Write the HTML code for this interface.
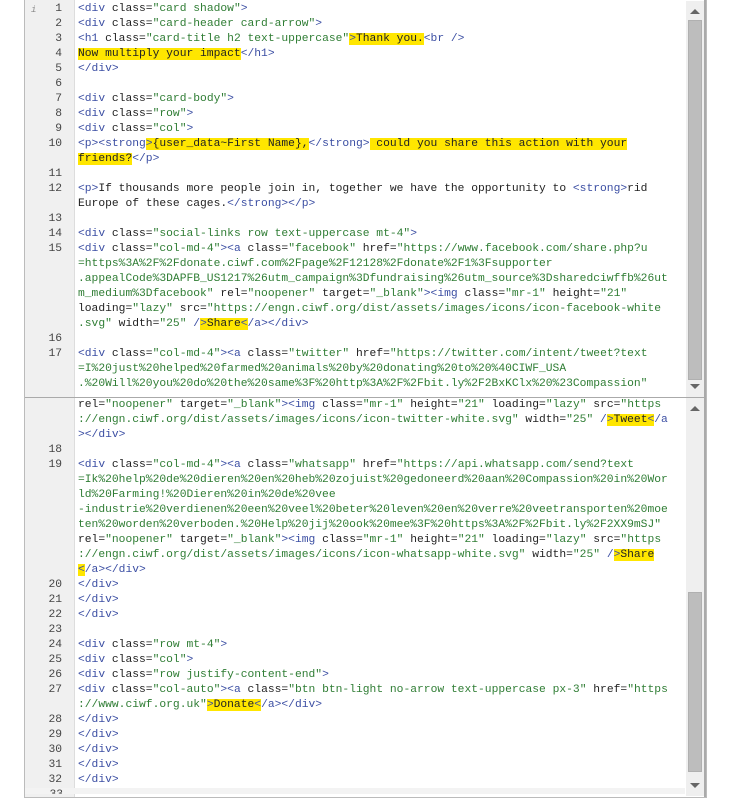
<!DOCTYPE html>
<html><head><meta charset="utf-8"><style>
body{margin:0;background:#fff;width:730px;height:799px;overflow:hidden;position:relative;font-family:"Liberation Mono",monospace;}
.ed{position:absolute;left:24px;top:-2px;width:681px;height:798px;border:1px solid #bbb;background:#fff;overflow:hidden}
.gut{position:absolute;left:0;top:0;width:49px;height:100%;background:#f0f0f0;border-right:1px solid #ddd}
.r{position:absolute;left:0;height:15px;line-height:15px;white-space:pre;font-size:11.3px;color:#222}
.n{position:absolute;left:0;width:38px;text-align:right;height:15px;line-height:15px;font-size:11.3px;color:#444}
.c{position:absolute;left:54px}
.t{color:#3b4ea3}.s{color:#2f7d34}.h{background:#ffe600}
.split{position:absolute;left:0;top:398px;width:681px;height:1px;background:#aaa}
.sb{position:absolute;left:661px;width:18px;background:#efefef}
.th{position:absolute;left:2px;width:14px;background:#bdbdbd;border:1px solid #b0b0b0;box-sizing:border-box}
.ar{position:absolute;left:4px;width:0;height:0;border-left:5px solid transparent;border-right:5px solid transparent}
.up{border-bottom:5px solid #666}.dn{border-top:5px solid #666}
.edge{position:absolute;left:679px;top:0;width:2px;height:100%;background:#aaa}
</style></head><body>
<div class="ed">
<div class="gut"></div>
<div class="split"></div>
<div class="sb" style="top:2px;height:396px"><div class="ar up" style="top:8px"></div><div class="th" style="top:19px;height:360px"></div><div class="ar dn" style="top:383px"></div></div>
<div class="sb" style="top:399px;height:398px"><div class="ar up" style="top:8px"></div><div class="th" style="top:194px;height:180px"></div><div class="ar dn" style="top:385px"></div></div>
<div class="edge"></div>
<div style="position:absolute;left:6px;top:6px;font-size:9px;color:#888;font-style:italic">i</div>
</div>
<div style="position:absolute;left:24px;top:2px">
<div class="n" style="top:0px">1</div><div class="r c" style="top:0px"><span class="t">&lt;div</span> class=<span class="s">"card shadow"</span><span class="t">&gt;</span></div>
<div class="n" style="top:15px">2</div><div class="r c" style="top:15px"><span class="t">&lt;div</span> class=<span class="s">"card-header card-arrow"</span><span class="t">&gt;</span></div>
<div class="n" style="top:30px">3</div><div class="r c" style="top:30px"><span class="t">&lt;h1</span> class=<span class="s">"card-title h2 text-uppercase"</span><span class="t h">&gt;</span><span class="h">Thank you.</span><span class="t">&lt;br /&gt;</span></div>
<div class="n" style="top:45px">4</div><div class="r c" style="top:45px"><span class="h">Now multiply your impact</span><span class="t">&lt;/h1&gt;</span></div>
<div class="n" style="top:60px">5</div><div class="r c" style="top:60px"><span class="t">&lt;/div&gt;</span></div>
<div class="n" style="top:75px">6</div>
<div class="n" style="top:90px">7</div><div class="r c" style="top:90px"><span class="t">&lt;div</span> class=<span class="s">"card-body"</span><span class="t">&gt;</span></div>
<div class="n" style="top:105px">8</div><div class="r c" style="top:105px"><span class="t">&lt;div</span> class=<span class="s">"row"</span><span class="t">&gt;</span></div>
<div class="n" style="top:120px">9</div><div class="r c" style="top:120px"><span class="t">&lt;div</span> class=<span class="s">"col"</span><span class="t">&gt;</span></div>
<div class="n" style="top:135px">10</div><div class="r c" style="top:135px"><span class="t">&lt;p&gt;&lt;strong</span><span class="t h">&gt;</span><span class="h">{user_data~First Name},</span><span class="t">&lt;/strong&gt;</span><span class="h"> could you share this action with your</span></div>
<div class="r c" style="top:150px"><span class="h">friends?</span><span class="t">&lt;/p&gt;</span></div>
<div class="n" style="top:165px">11</div>
<div class="n" style="top:180px">12</div><div class="r c" style="top:180px"><span class="t">&lt;p&gt;</span>If thousands more people join in, together we have the opportunity to <span class="t">&lt;strong&gt;</span>rid</div>
<div class="r c" style="top:195px">Europe of these cages.<span class="t">&lt;/strong&gt;&lt;/p&gt;</span></div>
<div class="n" style="top:210px">13</div>
<div class="n" style="top:225px">14</div><div class="r c" style="top:225px"><span class="t">&lt;div</span> class=<span class="s">"social-links row text-uppercase mt-4"</span><span class="t">&gt;</span></div>
<div class="n" style="top:240px">15</div><div class="r c" style="top:240px"><span class="t">&lt;div</span> class=<span class="s">"col-md-4"</span><span class="t">&gt;&lt;a</span> class=<span class="s">"facebook"</span> href=<span class="s">"https://www.facebook.com/share.php?u</span></div>
<div class="r c s" style="top:255px">=https%3A%2F%2Fdonate.ciwf.com%2Fpage%2F12128%2Fdonate%2F1%3Fsupporter</div>
<div class="r c s" style="top:270px">.appealCode%3DAPFB_US1217%26utm_campaign%3Dfundraising%26utm_source%3Dsharedciwffb%26ut</div>
<div class="r c" style="top:285px"><span class="s">m_medium%3Dfacebook"</span> rel=<span class="s">"noopener"</span> target=<span class="s">"_blank"</span><span class="t">&gt;&lt;img</span> class=<span class="s">"mr-1"</span> height=<span class="s">"21"</span></div>
<div class="r c" style="top:300px">loading=<span class="s">"lazy"</span> src=<span class="s">"https://engn.ciwf.org/dist/assets/images/icons/icon-facebook-white</span></div>
<div class="r c" style="top:315px"><span class="s">.svg"</span> width=<span class="s">"25"</span> <span class="t">/</span><span class="t h">&gt;</span><span class="h">Share</span><span class="t h">&lt;</span><span class="t">/a&gt;&lt;/div&gt;</span></div>
<div class="n" style="top:330px">16</div>
<div class="n" style="top:345px">17</div><div class="r c" style="top:345px"><span class="t">&lt;div</span> class=<span class="s">"col-md-4"</span><span class="t">&gt;&lt;a</span> class=<span class="s">"twitter"</span> href=<span class="s">"https://twitter.com/intent/tweet?text</span></div>
<div class="r c s" style="top:360px">=I%20just%20helped%20farmed%20animals%20by%20donating%20to%20%40CIWF_USA</div>
<div class="r c s" style="top:375px;height:15px;overflow:hidden">.%20Will%20you%20do%20the%20same%3F%20http%3A%2F%2Fbit.ly%2F2BxKClx%20%23Compassion"</div>

<div class="r c" style="top:396px">rel=<span class="s">"noopener"</span> target=<span class="s">"_blank"</span><span class="t">&gt;&lt;img</span> class=<span class="s">"mr-1"</span> height=<span class="s">"21"</span> loading=<span class="s">"lazy"</span> src=<span class="s">"https</span></div>
<div class="r c" style="top:411px"><span class="s">://engn.ciwf.org/dist/assets/images/icons/icon-twitter-white.svg"</span> width=<span class="s">"25"</span> <span class="t">/</span><span class="t h">&gt;</span><span class="h">Tweet</span><span class="t h">&lt;</span><span class="t">/a</span></div>
<div class="r c" style="top:426px"><span class="t">&gt;&lt;/div&gt;</span></div>
<div class="n" style="top:441px">18</div>
<div class="n" style="top:456px">19</div><div class="r c" style="top:456px"><span class="t">&lt;div</span> class=<span class="s">"col-md-4"</span><span class="t">&gt;&lt;a</span> class=<span class="s">"whatsapp"</span> href=<span class="s">"https://api.whatsapp.com/send?text</span></div>
<div class="r c s" style="top:471px">=Ik%20help%20de%20dieren%20en%20heb%20zojuist%20gedoneerd%20aan%20Compassion%20in%20Wor</div>
<div class="r c s" style="top:486px">ld%20Farming!%20Dieren%20in%20de%20vee</div>
<div class="r c s" style="top:501px">-industrie%20verdienen%20een%20veel%20beter%20leven%20en%20verre%20veetransporten%20moe</div>
<div class="r c s" style="top:516px">ten%20worden%20verboden.%20Help%20jij%20ook%20mee%3F%20https%3A%2F%2Fbit.ly%2F2XX9mSJ"</div>
<div class="r c" style="top:531px">rel=<span class="s">"noopener"</span> target=<span class="s">"_blank"</span><span class="t">&gt;&lt;img</span> class=<span class="s">"mr-1"</span> height=<span class="s">"21"</span> loading=<span class="s">"lazy"</span> src=<span class="s">"https</span></div>
<div class="r c" style="top:546px"><span class="s">://engn.ciwf.org/dist/assets/images/icons/icon-whatsapp-white.svg"</span> width=<span class="s">"25"</span> <span class="t">/</span><span class="t h">&gt;</span><span class="h">Share</span></div>
<div class="r c" style="top:561px"><span class="t h">&lt;</span><span class="t">/a&gt;&lt;/div&gt;</span></div>
<div class="n" style="top:576px">20</div><div class="r c t" style="top:576px">&lt;/div&gt;</div>
<div class="n" style="top:591px">21</div><div class="r c t" style="top:591px">&lt;/div&gt;</div>
<div class="n" style="top:606px">22</div><div class="r c t" style="top:606px">&lt;/div&gt;</div>
<div class="n" style="top:621px">23</div>
<div class="n" style="top:636px">24</div><div class="r c" style="top:636px"><span class="t">&lt;div</span> class=<span class="s">"row mt-4"</span><span class="t">&gt;</span></div>
<div class="n" style="top:651px">25</div><div class="r c" style="top:651px"><span class="t">&lt;div</span> class=<span class="s">"col"</span><span class="t">&gt;</span></div>
<div class="n" style="top:666px">26</div><div class="r c" style="top:666px"><span class="t">&lt;div</span> class=<span class="s">"row justify-content-end"</span><span class="t">&gt;</span></div>
<div class="n" style="top:681px">27</div><div class="r c" style="top:681px"><span class="t">&lt;div</span> class=<span class="s">"col-auto"</span><span class="t">&gt;&lt;a</span> class=<span class="s">"btn btn-light no-arrow text-uppercase px-3"</span> href=<span class="s">"https</span></div>
<div class="r c" style="top:696px"><span class="s">://www.ciwf.org.uk"</span><span class="t h">&gt;</span><span class="h">Donate</span><span class="t h">&lt;</span><span class="t">/a&gt;&lt;/div&gt;</span></div>
<div class="n" style="top:711px">28</div><div class="r c t" style="top:711px">&lt;/div&gt;</div>
<div class="n" style="top:726px">29</div><div class="r c t" style="top:726px">&lt;/div&gt;</div>
<div class="n" style="top:741px">30</div><div class="r c t" style="top:741px">&lt;/div&gt;</div>
<div class="n" style="top:756px">31</div><div class="r c t" style="top:756px">&lt;/div&gt;</div>
<div class="n" style="top:771px">32</div><div class="r c t" style="top:771px">&lt;/div&gt;</div>
<div style="position:absolute;left:1px;top:786px;width:660px;height:6px;background:#f3f3f3;overflow:hidden"><div class="n" style="top:0px">33</div></div>
</div>
</body></html>
